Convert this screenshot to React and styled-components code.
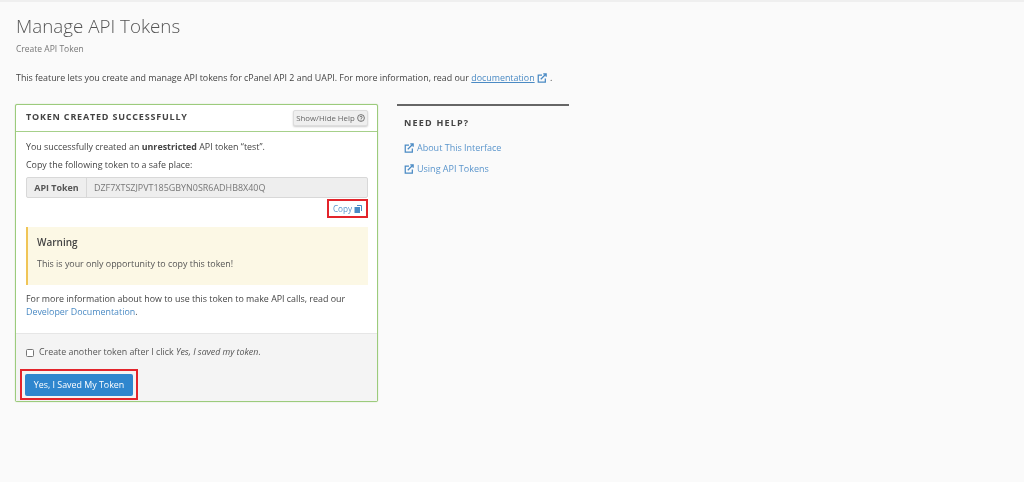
import React from "react";
import styled, { createGlobalStyle } from "styled-components";

const Global = createGlobalStyle`
  html, body { margin: 0; padding: 0; height: 100%; background: #fafafa; }
  body { font-family: "Open Sans", "Liberation Sans", sans-serif; color: #444; }
  * { box-sizing: border-box; }
`;

const Page = styled.div`
  width: 1024px;
  height: 482px;
  overflow: hidden;
  border-top: 2px solid #efefef;
  padding: 11px 16px 0;
  background: #fafafa;
  filter: blur(0.3px);
`;
const Title = styled.h1`
  margin: 0;
  font-size: 18.8px;
  line-height: 27px;
  font-weight: 300;
  color: #555;
`;
const Subtitle = styled.div`
  margin-top: 3px;
  font-size: 8.5px;
  line-height: 12px;
  color: #777;
`;
const Intro = styled.p`
  margin: 16px 0 0;
  font-size: 8.9px;
  line-height: 13px;
  color: #444;
  display: flex;
  align-items: center;
  white-space: pre;
`;
const Link = styled.a`
  color: #4a8ac4;
  text-decoration: ${(p) => (p.$underline ? "underline" : "none")};
`;
const IconSlot = styled.span`
  display: inline-flex;
  margin: 0 1px 0 2px;
`;
const Columns = styled.div`
  display: flex;
  margin-top: 20px;
  margin-left: -1px;
  gap: 19px;
  align-items: flex-start;
`;
const Panel = styled.section`
  width: 363px;
  height: 298px;
  background: #fff;
  border: 1px solid #9ccb7c;
  border-radius: 2px;
  box-shadow: 0 0 1px #9ccb7c;
  display: flex;
  flex-direction: column;
`;
const PanelHead = styled.header`
  height: 27px;
  flex: none;
  border-bottom: 1px solid #a6d08a;
  display: flex;
  align-items: center;
  justify-content: space-between;
  padding: 0 9px 3px 10px;
`;
const PanelTitle = styled.h2`
  margin: 0;
  font-size: 9px;
  font-weight: 700;
  letter-spacing: 0.8px;
  color: #444;
`;
const HelpButton = styled.button`
  height: 16px;
  width: 75px;
  margin-top: 2px;
  padding: 0;
  border: 1px solid #ddd;
  border-radius: 2px;
  background: #efefef;
  box-shadow: 0 1px 2px rgba(0, 0, 0, 0.2);
  color: #666;
  font: 400 7.8px "Open Sans", sans-serif;
  display: flex;
  align-items: center;
  justify-content: center;
  gap: 2px;
`;
const PanelBody = styled.div`
  padding: 8px 10px 0;
  flex: 1;
`;
const Line = styled.p`
  margin: 0 0 5px;
  font-size: 8.9px;
  line-height: 13px;
  color: #444;
`;
const TokenGroup = styled.div`
  display: flex;
  height: 21px;
  margin-top: 6px;
  margin-right: -1px;
  border: 1px solid #d8d8d8;
  border-radius: 2px;
  background: #eeeeee;
  font-size: 8.95px;
`;
const TokenLabel = styled.div`
  width: 60px;
  display: flex;
  align-items: center;
  justify-content: center;
  font-weight: 700;
  color: #555;
  border-right: 1px solid #d8d8d8;
`;
const TokenValue = styled.div`
  flex: 1;
  display: flex;
  align-items: center;
  padding-left: 7px;
  color: #777;
`;
const CopyRow = styled.div`
  display: flex;
  justify-content: flex-end;
  margin: 1px -1px 0 0;
`;
const CopyBox = styled.div`
  width: 41px;
  height: 19px;
  border: 2px solid #e3242b;
  display: flex;
  align-items: center;
  justify-content: center;
  gap: 2px;
  font-size: 8.2px;
  color: #5a95cc;
`;
const Warning = styled.div`
  margin: 9px -1px 0 0;
  height: 58px;
  background: #fcf8e5;
  border-left: 2px solid #f0c557;
  padding: 8px 9px;
`;
const WarningTitle = styled.h3`
  margin: 0;
  font-size: 10px;
  line-height: 15px;
  font-weight: 600;
  color: #444;
`;
const WarningText = styled.p`
  margin: 7px 0 0;
  font-size: 8.9px;
  line-height: 13px;
  color: #555;
`;
const More = styled.p`
  margin: 8px 0 0;
  font-size: 8.9px;
  line-height: 12.5px;
  color: #444;
`;
const PanelFoot = styled.footer`
  height: 68px;
  flex: none;
  background: #f4f4f4;
  border-top: 1px solid #e6e6e6;
  padding: 12px 10px 0;
`;
const CheckRow = styled.label`
  display: flex;
  align-items: center;
  gap: 5px;
  font-size: 8.86px;
  line-height: 13px;
  color: #555;
`;
const Check = styled.span`
  width: 8px;
  height: 8px;
  margin-top: 1px;
  border: 1px solid #777;
  border-radius: 1.5px;
  background: #fff;
`;
const SaveFrame = styled.div`
  width: 118px;
  height: 31px;
  margin: 10px 0 0 -6px;
  border: 2px solid #e3242b;
  display: flex;
  align-items: center;
  justify-content: center;
`;
const SaveButton = styled.button`
  width: 108px;
  height: 22px;
  padding: 0;
  border: 0;
  border-radius: 2px;
  background: #2f86ce;
  color: #fff;
  font: 400 8.9px "Open Sans", sans-serif;
`;
const Aside = styled.aside`
  width: 172px;
  border-top: 2px solid #666;
  padding: 11px 7px 0;
`;
const AsideTitle = styled.h2`
  margin: 0 0 12px;
  font-size: 9px;
  line-height: 12px;
  font-weight: 700;
  letter-spacing: 1.2px;
  color: #444;
`;
const AsideLink = styled.a`
  display: flex;
  align-items: center;
  gap: 3px;
  height: 13px;
  margin-bottom: 8px;
  font-size: 9px;
  color: #5a95cc;
  text-decoration: none;
`;

const External = ({ size = 10 }) => (
  <svg width={size} height={size} viewBox="0 0 12 12" fill="none" stroke="#4a8ac4" strokeWidth="1.5">
    <path d="M6 2.5H1.5v8.5h8.5V6.5" />
    <path d="M4.5 7.5 10.5 1.5M7.5 1h3.5v3.5" />
  </svg>
);

export default function App() {
  return (
    <Page>
      <Global />
      <Title>Manage API Tokens</Title>
      <Subtitle>Create API Token</Subtitle>
      <Intro>
        This feature lets you create and manage API tokens for cPanel API 2 and UAPI. For more information, read our{" "}
        <Link $underline href="#">documentation</Link>
        <IconSlot><External /></IconSlot> .
      </Intro>
      <Columns>
        <Panel>
          <PanelHead>
            <PanelTitle>TOKEN CREATED SUCCESSFULLY</PanelTitle>
            <HelpButton>
              Show/Hide Help
              <svg width="8" height="8" viewBox="0 0 8 8" fill="none" stroke="#555" strokeWidth="0.8">
                <circle cx="4" cy="4" r="3.4" />
                <path d="M2.9 3.2C2.9 2 5.2 2 5.2 3.2 5.2 4 4 4 4 5M4 5.6v.8" />
              </svg>
            </HelpButton>
          </PanelHead>
          <PanelBody>
            <Line>You successfully created an <b>unrestricted</b> API token “test”.</Line>
            <Line>Copy the following token to a safe place:</Line>
            <TokenGroup>
              <TokenLabel>API Token</TokenLabel>
              <TokenValue>DZF7XTSZJPVT185GBYN0SR6ADHB8X40Q</TokenValue>
            </TokenGroup>
            <CopyRow>
              <CopyBox>
                Copy
                <svg width="8" height="8" viewBox="0 0 8 8" fill="#4a8ac4">
                  <path d="M3 0h4a1 1 0 0 1 1 .8V6H7V1H3zM0.5 2h5.5v6H0.5z" />
                </svg>
              </CopyBox>
            </CopyRow>
            <Warning>
              <WarningTitle>Warning</WarningTitle>
              <WarningText>This is your only opportunity to copy this token!</WarningText>
            </Warning>
            <More>
              For more information about how to use this token to make API calls, read our
              <br />
              <Link href="#">Developer Documentation</Link>.
            </More>
          </PanelBody>
          <PanelFoot>
            <CheckRow>
              <Check />
              <span>Create another token after I click <i>Yes, I saved my token</i>.</span>
            </CheckRow>
            <SaveFrame>
              <SaveButton>Yes, I Saved My Token</SaveButton>
            </SaveFrame>
          </PanelFoot>
        </Panel>
        <Aside>
          <AsideTitle>NEED HELP?</AsideTitle>
          <AsideLink href="#"><External /> About This Interface</AsideLink>
          <AsideLink href="#"><External /> Using API Tokens</AsideLink>
        </Aside>
      </Columns>
    </Page>
  );
}
